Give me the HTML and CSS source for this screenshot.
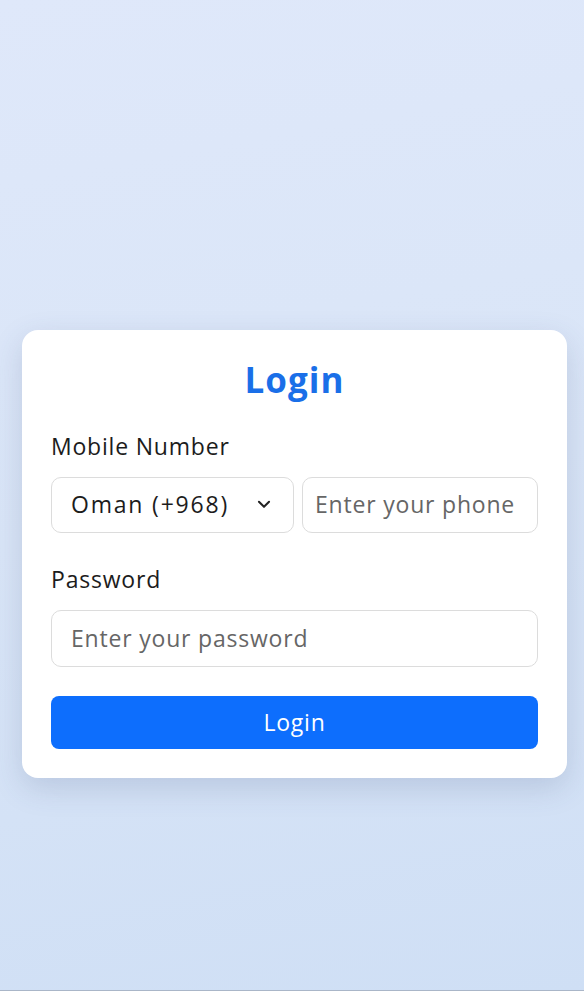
FILE: index.html
```html
<!DOCTYPE html>
<html>
<head>
    <title>Login</title>
    <link rel="stylesheet" href="styles.css">
</head>
<body>
    <div class="login-card">
        <h2>Login</h2>
        <div class="input-group">
            <label for="phone">Mobile Number</label>
            <div class="phone-row">
                <div class="country-select">
                    <span>Oman (+968)</span>
                    <svg width="18" height="18" viewBox="0 0 16 16"><path d="M3.5 6l4.5 4.5L12.5 6" fill="none" stroke="#222" stroke-width="1.8" stroke-linecap="round" stroke-linejoin="round"/></svg>
                </div>
                <input type="tel" id="phone" placeholder="Enter your phone">
            </div>
        </div>
        <div class="input-group">
            <label for="password">Password</label>
            <input type="password" id="password" placeholder="Enter your password" class="full">
        </div>
        <button>Login</button>
    </div>
</body>
</html>
```

FILE: styles.css
```css
html {
    height: 100%;
}
body {
    margin: 0;
    min-height: 100%;
    padding-top: 330px;
    box-sizing: border-box;
    font-family: "Open Sans", "Noto Sans", sans-serif;
    background: linear-gradient(170deg, #dfe8fa 0%, #d9e5f7 50%, #cfdff5 100%);
    border-bottom: 1px solid #aab6c8;
}
.login-card {
    width: 545px;
    margin-left: 22px;
    padding: 29px 29px 29px;
    box-sizing: border-box;
    background: #fff;
    border-radius: 16px;
    box-shadow: 0 10px 30px rgba(60, 80, 120, 0.18);
}
.login-card h2 {
    margin: 0;
    text-align: center;
    color: #1a6fe8;
    font-size: 35px;
    font-weight: 700;
    letter-spacing: 1px;
    line-height: 41px;
}
.input-group {
    margin-top: 30px;
}
.input-group label {
    display: block;
    font-size: 23px;
    letter-spacing: 0.8px;
    line-height: 33px;
    color: #1c1c1c;
    margin-bottom: 14px;
}
.phone-row {
    display: flex;
    gap: 8px;
}
.country-select {
    flex: none;
    width: 243px;
    height: 56px;
    box-sizing: border-box;
    border: 1px solid #dcdcdc;
    border-radius: 10px;
    display: flex;
    align-items: center;
    justify-content: space-between;
    padding: 0 20px 2px 19px;
    font-size: 23px;
    letter-spacing: 1.8px;
    color: #1c1c1c;
    white-space: nowrap;
}
input {
    flex: 1;
    min-width: 0;
    height: 56px;
    box-sizing: border-box;
    border: 1px solid #dcdcdc;
    border-radius: 10px;
    padding: 0 12px 2px;
    font-family: inherit;
    font-size: 23px;
    letter-spacing: 0.8px;
    color: #1c1c1c;
    outline: none;
}
input::placeholder {
    color: #666;
}
input.full {
    width: 100%;
    height: 57px;
    padding-left: 19px;
}
button {
    display: block;
    width: 100%;
    height: 53px;
    margin-top: 29px;
    padding-bottom: 3px;
    border: none;
    border-radius: 8px;
    background: #0d6efd;
    color: #fff;
    font-family: inherit;
    font-size: 23px;
    letter-spacing: 0.8px;
}
```
